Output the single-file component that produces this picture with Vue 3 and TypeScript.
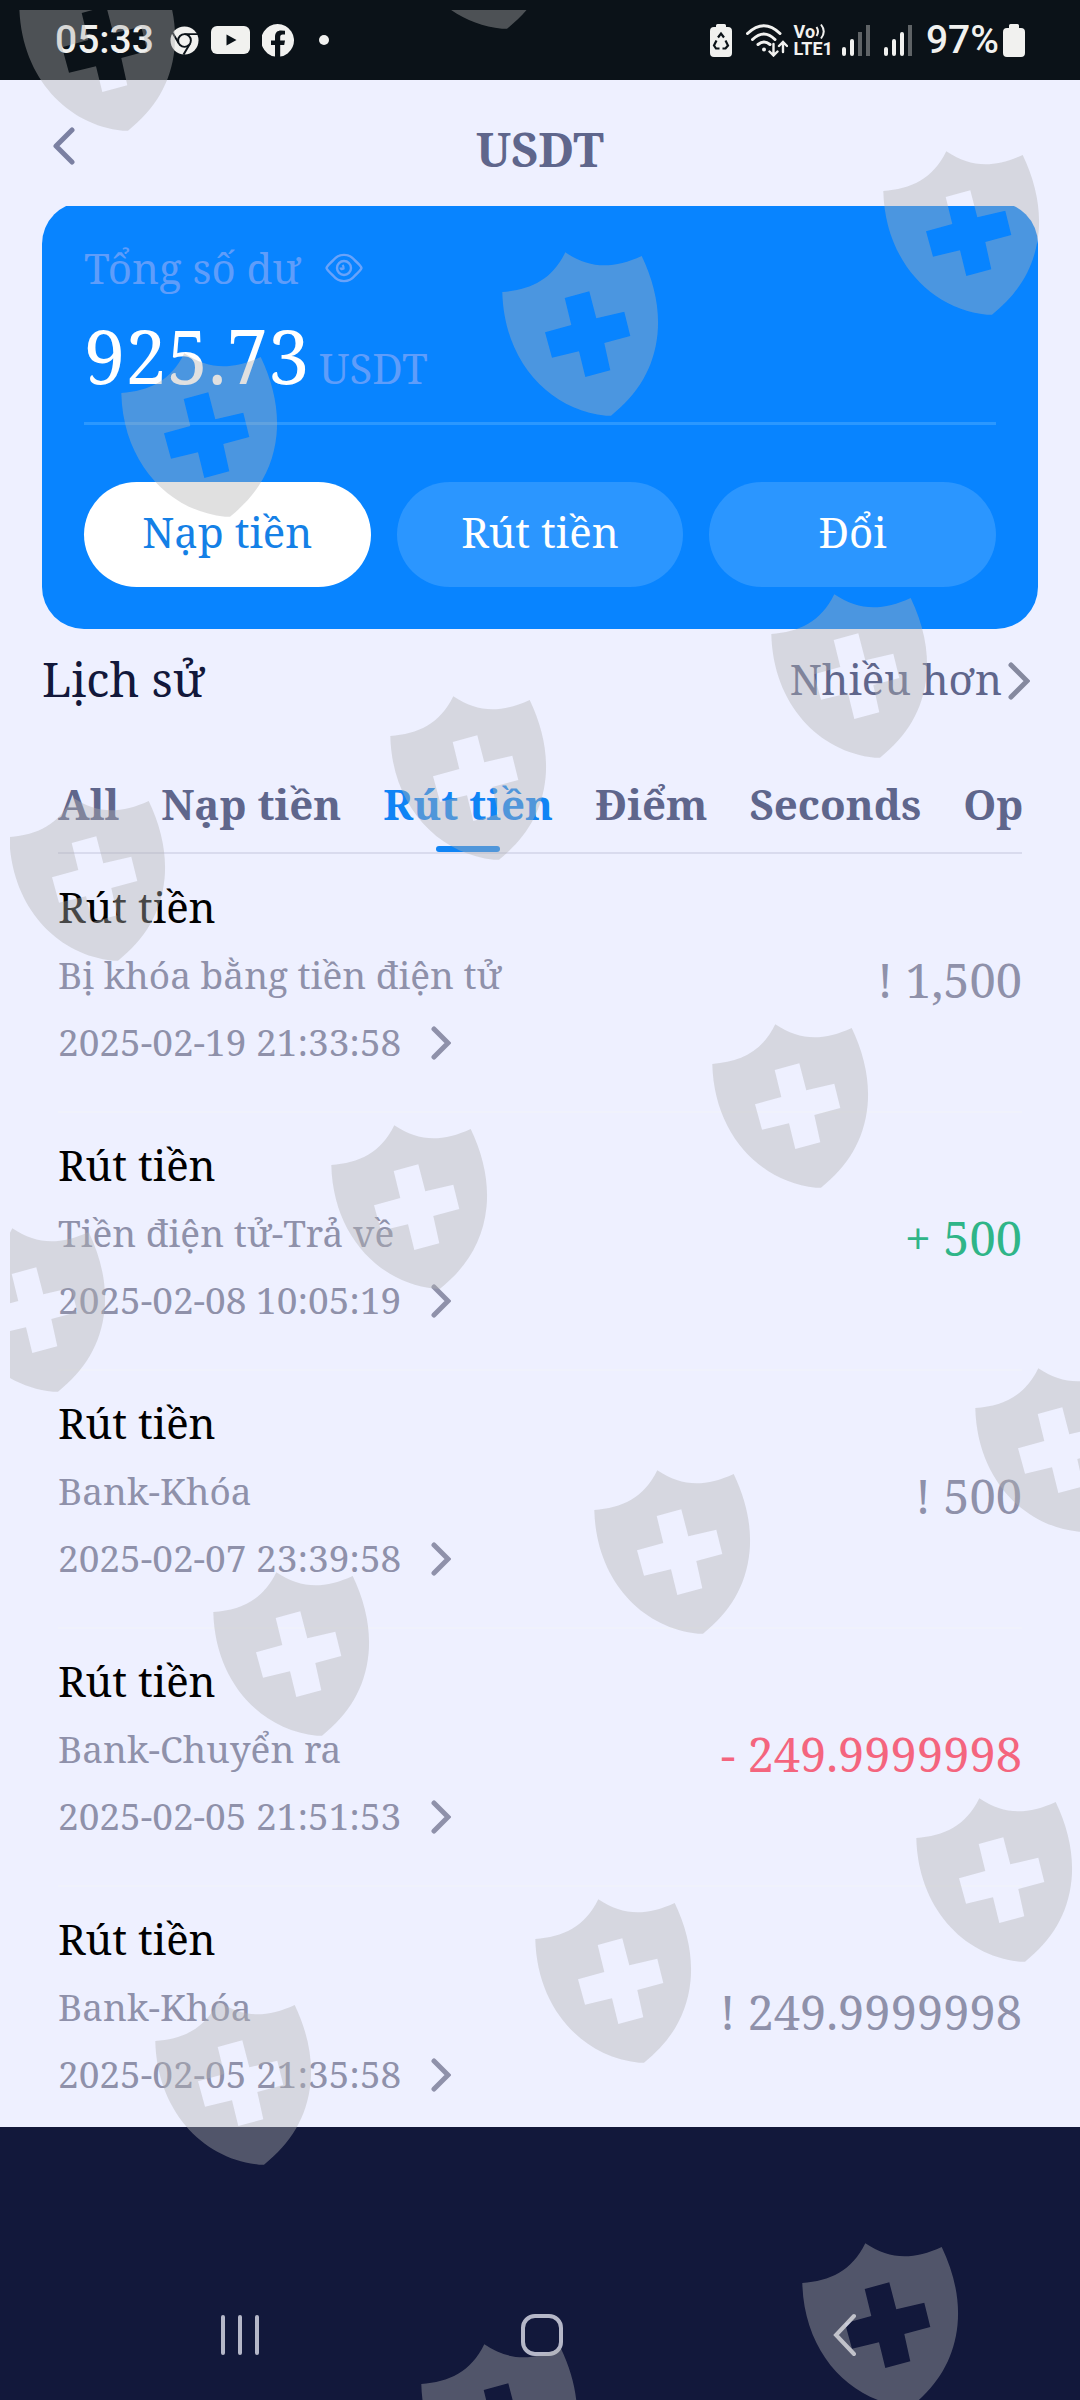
<script setup lang="ts">
import { ref } from 'vue'

interface Entry {
  title: string
  note: string
  time: string
  amount: string
  tone: 'pending' | 'gain' | 'loss'
}

const actions: string[] = ['Nạp tiền', 'Rút tiền', 'Đổi']
const tabs: string[] = ['All', 'Nạp tiền', 'Rút tiền', 'Điểm', 'Seconds', 'Op']
const activeTab = ref<string>('Rút tiền')

const entries: Entry[] = [
  { title: 'Rút tiền', note: 'Bị khóa bằng tiền điện tử', time: '2025-02-19 21:33:58', amount: '! 1,500', tone: 'pending' },
  { title: 'Rút tiền', note: 'Tiền điện tử-Trả về', time: '2025-02-08 10:05:19', amount: '+ 500', tone: 'gain' },
  { title: 'Rút tiền', note: 'Bank-Khóa', time: '2025-02-07 23:39:58', amount: '! 500', tone: 'pending' },
  { title: 'Rút tiền', note: 'Bank-Chuyển ra', time: '2025-02-05 21:51:53', amount: '- 249.9999998', tone: 'loss' },
  { title: 'Rút tiền', note: 'Bank-Khóa', time: '2025-02-05 21:35:58', amount: '! 249.9999998', tone: 'pending' },
]

// Positions of the shield stamps inside the watermark layer
const stamps: [number, number][] = [
  [7, -45], [386, -147], [871, 139], [490, 240], [109, 341], [759, 582], [378, 684],
  [-3, 785], [700, 1012], [319, 1113], [-63, 1216], [963, 1356], [582, 1458],
  [201, 1560], [904, 1786], [523, 1887], [143, 1989], [790, 2231], [409, 2332],
]
</script>

<template>
  <div class="page">
    <div class="status">
      <div class="status-left">
        <span class="clock">05:33</span>
        <svg width="29" height="29" viewBox="0 0 30 30" aria-hidden="true">
          <circle cx="15" cy="15" r="14.5" fill="#f1f1ef" />
          <path d="M15 8.4H29M9.4 18.4 2 6M20.6 18.4 14 29.6" stroke="#0b1218" stroke-width="2" fill="none" />
          <circle cx="15" cy="15" r="6.6" fill="#f1f1ef" stroke="#0b1218" stroke-width="2" />
        </svg>
        <svg width="39" height="28" viewBox="0 0 39 28" aria-hidden="true">
          <rect width="39" height="28" rx="6" fill="#f1f1ef" />
          <path d="M15.500 8.500V19.500L25.500 14Z" fill="#0b1218" />
        </svg>
        <svg width="33" height="33" viewBox="0 0 33 33" aria-hidden="true">
          <path fill="#f1f1ef" d="M13 32.600V21H9V16.500H13V13C13 8.500 15.500 6.500 19 6.500L23 6.800V10.600H20.800C18.800 10.600 18.200 11.600 18.200 13V16.500H23L22.200 21H18.200V32.600A16.400 16.400 0 1 0 13 32.600Z" />
        </svg>
        <span class="dot"></span>
      </div>
      <div class="status-right">
        <svg width="22" height="33" viewBox="0 0 22 33" aria-hidden="true">
          <path d="M6 3V1.500Q6 0 7.500 0H14.500Q16 0 16 1.500V3H18Q22 3 22 7V29Q22 33 18 33H4Q0 33 0 29V7Q0 3 4 3Z" fill="#f1f1ef" />
          <path d="M8 13.500 11 9.500 14 13.500M15.500 16.500 18 21.500 15.500 24.500H12.500M6.500 16.500 4 21.500 6 24.500H9.500" stroke="#0b1218" stroke-width="2.200" fill="none" />
        </svg>
        <svg class="wifi" width="42" height="33" viewBox="0 0 42 33" fill="none" stroke="#f1f1ef" stroke-linecap="round" aria-hidden="true">
          <path d="M1.500 9.500Q18 -6 34 9.500M6.500 15.500Q18 4.500 29 15.500M12 20.500Q18 15.500 24 20.500" stroke-width="3" />
          <circle cx="18" cy="25.500" r="2" fill="#f1f1ef" stroke="none" />
          <path d="M27.500 20V31M23.500 27.500 27.500 31.500 31.500 27.500M37 28V18.500M33 22 37 18 41 22" stroke-width="2.400" />
        </svg>
        <span class="volte">
          <span class="vo">Vo<svg width="12" height="17" viewBox="0 0 12 17" fill="none" stroke="#f1f1ef" stroke-width="2" aria-hidden="true"><path d="M1.500 4Q4.500 8.500 1.500 13M6 1.500Q11.500 8.500 6 15.500" /></svg></span>
          <span>LTE1</span>
        </span>
        <svg width="28" height="31" viewBox="0 0 28 31" aria-hidden="true">
          <path d="M2 24V29M10 16V29" stroke="#f1f1ef" stroke-width="4" stroke-linecap="round" />
          <path d="M18 7V31M26 0V31" stroke="#5f6366" stroke-width="4" />
        </svg>
        <svg class="signal" width="28" height="31" viewBox="0 0 28 31" aria-hidden="true">
          <path d="M2 24V29M10 16V29M18 9V29" stroke="#f1f1ef" stroke-width="4" stroke-linecap="round" />
          <path d="M26 0V31" stroke="#5f6366" stroke-width="4" />
        </svg>
        <span class="battery">
          <span class="clock">97%</span>
          <svg width="22" height="33" viewBox="0 0 22 33" aria-hidden="true">
            <path d="M6 4V1.500Q6 0 7.500 0H14.500Q16 0 16 1.500V4H18Q22 4 22 8V29Q22 33 18 33H4Q0 33 0 29V8Q0 4 4 4Z" fill="#f1f1ef" />
          </svg>
        </span>
      </div>
    </div>

    <header class="header">
      <button class="back" aria-label="Back">
        <svg width="24" height="40" viewBox="0 0 24 40" fill="none" stroke="#7b80a2" stroke-width="5" stroke-linecap="round" stroke-linejoin="round" aria-hidden="true">
          <path d="M20 3 4 19 20 35" />
        </svg>
      </button>
      <h1>USDT</h1>
    </header>

    <main class="content">
      <section class="card">
        <div class="label">
          <span>Tổng số dư</span>
          <button class="eye" aria-label="Show balance">
            <svg width="38" height="30" viewBox="0 0 38 30" fill="none" stroke="#69a3fa" stroke-width="2.400" aria-hidden="true">
              <path d="M1.500 15Q2 13 8 7.500C14 0 24 0 30 7.500Q36 13 36.500 15Q36 17 30 22.500C24 30 14 30 8 22.500Q2 17 1.500 15Z" />
              <circle cx="19" cy="15" r="7" />
              <path d="M15.500 14.500Q16 17 18.500 15.500Q19 13.500 17.500 12" />
            </svg>
          </button>
        </div>
        <div class="balance"><strong>925.73</strong><span>USDT</span></div>
        <div class="actions">
          <button v-for="(name, i) in actions" :key="name" :class="{ primary: i === 0 }">{{ name }}</button>
        </div>
      </section>

      <div class="history">
        <h2>Lịch sử</h2>
        <a href="#" class="more">
          <span>Nhiều hơn</span>
          <svg width="22" height="44" viewBox="0 0 22 44" fill="none" stroke="#85899f" stroke-width="5" stroke-linecap="round" aria-hidden="true">
            <path d="M3 8 19 24 3 40" />
          </svg>
        </a>
      </div>

      <div class="panel">
        <nav class="tabs">
          <button
            v-for="tab in tabs"
            :key="tab"
            :class="{ active: tab === activeTab }"
            @click="activeTab = tab"
          >{{ tab }}</button>
        </nav>
        <ul class="list">
          <li v-for="entry in entries" :key="entry.time">
            <div class="info">
              <h3>{{ entry.title }}</h3>
              <p>{{ entry.note }}</p>
              <p class="time">
                <time>{{ entry.time }}</time>
                <svg width="20" height="36" viewBox="0 0 20 36" fill="none" stroke="#8f91aa" stroke-width="5" stroke-linecap="round" aria-hidden="true">
                  <path d="M3 5 17 19 3 33" />
                </svg>
              </p>
            </div>
            <span class="amount" :class="entry.tone">{{ entry.amount }}</span>
          </li>
        </ul>
      </div>
    </main>

    <footer class="navbar">
      <button aria-label="Recent apps">
        <svg width="42" height="44" viewBox="0 0 42 44" stroke="#f4f5ff" stroke-opacity="0.72" stroke-width="4" stroke-linecap="round" aria-hidden="true">
          <path d="M4 4V40M21 4V40M38 4V40" />
        </svg>
      </button>
      <button aria-label="Home">
        <svg width="44" height="44" viewBox="0 0 44 44" fill="none" stroke="#f4f5ff" stroke-opacity="0.72" stroke-width="4" aria-hidden="true">
          <rect x="3" y="3" width="38" height="38" rx="12" />
        </svg>
      </button>
      <button aria-label="Go back">
        <svg width="24" height="44" viewBox="0 0 24 44" fill="none" stroke="#f4f5ff" stroke-opacity="0.82" stroke-width="4" stroke-linecap="round" aria-hidden="true">
          <path d="M22 3 4 22 22 41" />
        </svg>
      </button>
    </footer>

    <svg class="watermark" aria-hidden="true">
      <defs>
        <path
          id="shield"
          fill-rule="evenodd"
          d="M2.300 42C30 40 52 30 65.300 2.300C90 19 113 19 141.700 6C154 32 160 58 157.500 84C154 118 138 144 111 165.700H106C50 160 4 112 2.300 42ZM64.700 48L89.300 41.300L96.300 68.300L124.300 61.700L130.300 86L104.300 93L110.300 120.300L85.300 127L79 101.300L52 107.700L45 82.300L71.300 75Z"
        />
      </defs>
      <use v-for="([x, y], i) in stamps" :key="i" href="#shield" :x="x" :y="y" />
    </svg>
  </div>
</template>

<style>
body {
  background: #12183b;
}
</style>

<style scoped>
.page {
  position: relative;
  display: flex;
  flex-direction: column;
  min-height: 100vh;
  overflow: hidden;
  background: #12183b;
  font-family: "Noto Serif", "DejaVu Serif Condensed", "DejaVu Serif", serif;
}

h1, h2, h3, p, ul {
  margin: 0;
  padding: 0;
  font-weight: 400;
}

button {
  border: 0;
  padding: 0;
  background: none;
  font: inherit;
  color: inherit;
}

svg {
  display: block;
  flex: none;
}

.status {
  display: flex;
  justify-content: space-between;
  align-items: center;
  height: 80px;
  padding: 0 55px;
  background: #0b1218;
  color: #f1f1ef;
  font-family: Roboto, sans-serif;
}

.status-left, .status-right, .battery {
  display: flex;
  align-items: center;
}

.status-left {
  gap: 12px;
}

.clock {
  font-size: 39px;
  font-weight: 500;
  line-height: 48px;
}

.status-left .clock {
  margin-right: 4px;
}

.dot {
  width: 10px;
  height: 10px;
  margin-left: 12px;
  border-radius: 50%;
  background: #f1f1ef;
}

.status-right {
  gap: 6px;
}

.battery {
  gap: 4px;
}

.wifi {
  margin-left: 8px;
}

.signal {
  margin: 0 8px;
}

.volte {
  display: flex;
  flex-direction: column;
  margin-right: 3px;
  font-size: 18px;
  font-weight: 700;
  line-height: 17px;
}

.vo {
  display: flex;
}

.header {
  display: grid;
  grid-template-columns: 52px 1fr 52px;
  align-items: center;
  height: 114px;
  padding: 12px 52px 0;
  background: #eef0ff;
  color: #5f668c;
}

.back svg {
  margin-bottom: 4px;
}

.header h1 {
  font-size: 47px;
  font-weight: 700;
  line-height: 60px;
  text-align: center;
}

.content {
  padding: 0 42px 18px;
  overflow: hidden;
  background: #eef0ff;
}

.card {
  margin-top: -4px;
  padding: 36px 42px 42px;
  border-radius: 42px;
  background: #0884ff;
}

.label {
  display: flex;
  align-items: center;
  gap: 24px;
  font-size: 42px;
  line-height: 60px;
  color: #5f9dfa;
}

.balance {
  display: flex;
  align-items: baseline;
  gap: 10px;
  padding: 18px 0 26px;
  border-bottom: 3px solid #2b98ff;
  font-size: 42px;
  line-height: 48px;
  color: #5f9dfa;
}

.balance strong {
  font-size: 74px;
  font-weight: 400;
  line-height: 80px;
  color: #fff;
}

.actions {
  display: grid;
  grid-template-columns: repeat(3, 1fr);
  gap: 26px;
  margin-top: 57px;
}

.actions button {
  height: 105px;
  padding-bottom: 5px;
  border-radius: 53px;
  background: #2b96ff;
  font-size: 42px;
  line-height: 60px;
  color: #fff;
}

.actions .primary {
  background: #fff;
  color: #1480e6;
}

.history {
  display: flex;
  justify-content: space-between;
  align-items: center;
  height: 100px;
}

.history h2 {
  font-size: 47px;
  line-height: 60px;
  color: #12183b;
}

.more {
  display: flex;
  align-items: center;
  gap: 6px;
  padding-right: 8px;
  font-size: 42px;
  line-height: 60px;
  color: #5f668c;
  text-decoration: none;
}

.panel {
  padding: 0 16px;
}

.tabs {
  display: flex;
  gap: 42px;
  padding-top: 45px;
  border-bottom: 2px solid #d9dbee;
  white-space: nowrap;
}

.tabs button {
  position: relative;
  height: 78px;
  padding-bottom: 18px;
  font-size: 42px;
  font-weight: 700;
  line-height: 60px;
  color: #5f668c;
}

.tabs .active {
  color: #0f84f5;
}

.tabs .active::after {
  content: "";
  position: absolute;
  bottom: 0;
  left: 50%;
  width: 64px;
  height: 6px;
  margin-left: -32px;
  border-radius: 3px;
  background: #0f84f5;
}

.list {
  list-style: none;
}

.list li {
  display: flex;
  justify-content: space-between;
  align-items: center;
  padding: 18px 0 36px;
  border-bottom: 2px solid #f0f2fc;
}

.list li:last-child {
  padding-bottom: 2px;
  border-bottom: 0;
}

.info h3 {
  font-size: 42px;
  line-height: 68px;
  color: #000;
}

.info p {
  font-size: 37px;
  line-height: 67px;
  color: #8f91aa;
}

.info .time {
  display: flex;
  align-items: center;
  gap: 30px;
}

.amount {
  margin-top: 12px;
  font-size: 47px;
  line-height: 60px;
}

.pending {
  color: #8f91aa;
}

.gain {
  color: #2fb588;
}

.loss {
  color: #f4657e;
}

.list {
  padding-top: 1px;
}

.navbar {
  display: grid;
  flex: 1;
  grid-template-columns: repeat(3, 1fr);
  align-items: end;
  justify-items: center;
  padding: 120px 85px 43px 89px;
}

.watermark {
  position: absolute;
  top: 10px;
  left: 10px;
  width: calc(100% - 10px);
  height: calc(100% - 10px);
  fill: rgba(178, 178, 178, 0.4);
  pointer-events: none;
}
</style>
